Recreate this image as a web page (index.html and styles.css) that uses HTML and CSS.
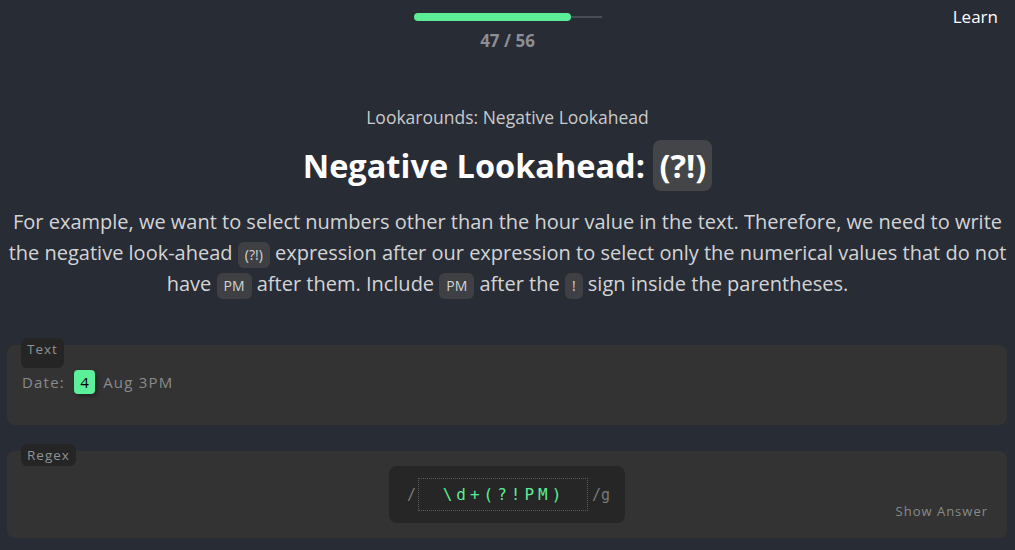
FILE: index.html
```html
<!DOCTYPE html>
<html>
<head>
<meta charset="utf-8">
<link rel="stylesheet" href="styles.css">
</head>
<body>
<header class="top">
  <div class="progress">
    <div class="track"><div class="fill" style="width:84%"></div></div>
    <div class="count">47 / 56</div>
  </div>
  <a class="learn">Learn</a>
</header>
<main class="lesson">
  <div class="sub">Lookarounds: Negative Lookahead</div>
  <h1 class="title">Negative Lookahead: <code class="big">(?!)</code></h1>
  <p class="desc">For example, we want to select numbers other than the hour value in the text. Therefore, we need to write the negative look-ahead <code class="inl">(?!)</code> expression after our expression to select only the numerical values that do not have <code class="inl">PM</code> after them. Include <code class="inl">PM</code> after the <code class="inl">!</code> sign inside the parentheses.</p>
</main>
<section class="panel text-panel">
  <span class="tag tag-tall">Text</span>
  <div class="sample">Date: <mark class="hit">4</mark> Aug 3PM</div>
</section>
<section class="panel regex-panel">
  <span class="tag">Regex</span>
  <div class="regex-row">
    <div class="regex-box">
      <span class="slash">/</span>
      <span class="input">\d+(?!PM)</span>
      <span class="slash">/g</span>
    </div>
  </div>
  <a class="answer">Show Answer</a>
</section>
</body>
</html>
```
FILE: styles.css
```css
html, body { margin: 0; padding: 0; }
body {
  background: #282c35;
  font-family: "Open Sans", "Noto Sans", sans-serif;
  color: #fff;
  width: 1015px;
  height: 550px;
  overflow: hidden;
}
.top {
  position: relative;
  height: 62px;
  display: flex;
  justify-content: center;
}
.progress {
  padding-top: 13px;
  display: flex;
  flex-direction: column;
  align-items: center;
}
.track {
  width: 188px;
  height: 2px;
  background: #4a4d55;
  margin-top: 3px;
  position: relative;
}
.fill {
  position: absolute;
  left: 0;
  top: -3px;
  height: 8px;
  background: #5ced97;
  border-radius: 4px;
}
.count {
  margin-top: 12px;
  font-size: 17px;
  font-weight: 700;
  color: #8c8e93;
  line-height: 22px;
}
.learn {
  position: absolute;
  right: 17px;
  top: 6px;
  font-size: 17px;
  line-height: 22px;
  color: #fff;
}
.lesson {
  text-align: center;
  padding-top: 44px;
}
.sub {
  font-size: 17.5px;
  line-height: 22px;
  color: #c9cacc;
}
.title {
  margin: 12px 0 0;
  font-size: 32.5px;
  font-weight: 700;
  line-height: 52px;
  color: #fff;
}
.big {
  font-family: inherit;
  display: inline-block;
  background: #444548;
  border-radius: 8px;
  padding: 0 6px;
  line-height: 51px;
}
.desc {
  margin: 14px 0 0;
  padding: 0 6px;
  font-size: 20px;
  line-height: 31px;
  color: #d3d4d6;
}
.inl {
  font-family: inherit;
  font-size: 14px;
  display: inline-block;
  line-height: 26px;
  background: #3f4043;
  border-radius: 6px;
  padding: 0 7px;
}
.panel {
  position: relative;
  margin: 0 8px 0 7px;
  background: #333;
  border-radius: 8px;
}
.text-panel {
  margin-top: 46px;
  height: 80px;
}
.regex-panel {
  margin-top: 26px;
  height: 87px;
}
.tag {
  position: absolute;
  left: 14px;
  top: -7px;
  height: 22px;
  background: #252525;
  border-radius: 6px;
  padding: 0 6px;
  font-size: 13.5px;
  line-height: 22px;
  letter-spacing: 1px;
  color: #8f9296;
  font-family: "Open Sans", sans-serif;
}
.tag-tall { height: 30px; }
.sample {
  padding: 24px 0 0 15px;
  font-size: 15px;
  letter-spacing: 1.2px;
  color: #8a8a8a;
  line-height: 26px;
}
.hit {
  display: inline-block;
  background: #5cf09b;
  color: #000;
  border-radius: 4px;
  width: 21px;
  text-align: center;
  line-height: 24px;
  letter-spacing: 0;
  margin: 0 3px 0 4px;
  box-shadow: 2px 2px 4px rgba(0,0,0,.35);
}
.regex-row {
  display: flex;
  justify-content: center;
  padding-top: 15px;
}
.regex-box {
  width: 236px;
  height: 57px;
  box-sizing: border-box;
  background: #262626;
  border-radius: 8px;
  display: flex;
  align-items: center;
  padding-left: 18px;
}
.slash {
  font-family: "DejaVu Sans Mono", monospace;
  font-size: 15px;
  color: #7a7a7a;
}
.input {
  width: 170px;
  height: 33px;
  box-sizing: border-box;
  border: 1px dotted #5c5c5c;
  margin: 0 4px 0 2px;
  display: flex;
  align-items: center;
  justify-content: center;
  font-family: "DejaVu Sans Mono", monospace;
  font-size: 16px;
  letter-spacing: 4px;
  padding-left: 2px;
  color: #5ced97;
}
.answer {
  position: absolute;
  right: 19px;
  top: 51px;
  font-size: 13px;
  letter-spacing: 1px;
  color: #8a8a8a;
}
```
